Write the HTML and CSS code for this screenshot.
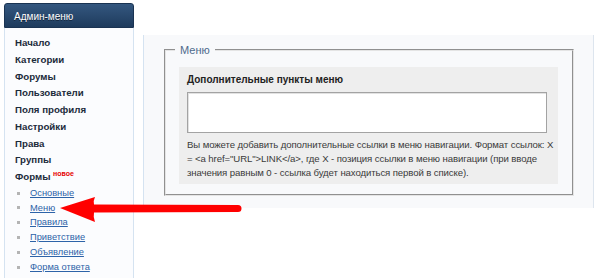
FILE: index.html
```html
<!DOCTYPE html>
<html lang="ru">
<head>
<meta charset="utf-8">
<title>Админ-меню</title>
<link rel="stylesheet" href="styles.css">
</head>
<body>
<div class="page">
  <aside class="sidebar">
    <div class="side-head">Админ-меню</div>
    <div class="side-body">
      <ul class="nav">
        <li>Начало</li>
        <li>Категории</li>
        <li>Форумы</li>
        <li>Пользователи</li>
        <li>Поля профиля</li>
        <li>Настройки</li>
        <li>Права</li>
        <li>Группы</li>
        <li>Формы <sup class="new">новое</sup></li>
      </ul>
      <ul class="sub">
        <li><a href="#">Основные</a></li>
        <li><a href="#">Меню</a></li>
        <li><a href="#">Правила</a></li>
        <li><a href="#">Приветствие</a></li>
        <li><a href="#">Объявление</a></li>
        <li><a href="#">Форма ответа</a></li>
      </ul>
    </div>
  </aside>
  <main class="main">
    <fieldset class="fs">
      <legend class="legend">Меню</legend>
      <div class="box">
        <div class="box-title">Дополнительные пункты меню</div>
        <textarea class="ta"></textarea>
        <p class="desc">Вы можете добавить дополнительные ссылки в меню навигации. Формат ссылок: X = &lt;a href="URL"&gt;LINK&lt;/a&gt;, где X - позиция ссылки в меню навигации (при вводе значения равным 0 - ссылка будет находиться первой в списке).</p>
      </div>
    </fieldset>
  </main>
  <svg class="arrow" width="600" height="278" viewBox="0 0 600 278" aria-hidden="true">
    <path d="M60 208 L95 197 Q93 201 94 204.5 L238 205 A3.5 3.5 0 0 1 238 212 L94 212.5 Q93 217 95 222 Z" fill="#ff0000"/>
  </svg>
</div>
</body>
</html>
```
FILE: styles.css
```css
html, body {
  margin: 0;
  padding: 0;
  background: #ffffff;
  overflow: hidden;
}
body {
  font-family: "Liberation Sans", Arial, sans-serif;
  font-size: 10px;
  color: #333;
}
.page {
  position: relative;
  display: flex;
  align-items: flex-start;
  padding-left: 4px;
  height: 278px;
  overflow: hidden;
}
.sidebar {
  width: 130px;
  margin-top: 3px;
  flex: none;
}
.side-head {
  height: 25px;
  line-height: 25px;
  box-sizing: border-box;
  padding-left: 9px;
  color: #fff;
  font-size: 10px;
  background: linear-gradient(#34577f, #1e3b5d);
  border: 1px solid #1a3352;
  border-radius: 3px 3px 0 0;
  text-shadow: 0 1px 0 #10243a;
}
.side-body {
  box-sizing: border-box;
  height: 250px;
  background: #fbfcfe;
  border-left: 1px solid #d5e3f1;
  border-right: 1px solid #d5e3f1;
  padding: 7px 0 0 10px;
}
.nav, .sub {
  list-style: none;
  margin: 0;
  padding: 0;
}
.nav li {
  font-weight: bold;
  font-size: 9.7px;
  line-height: 16.75px;
  color: #1c2b3b;
  white-space: nowrap;
}
.new {
  color: #e60000;
  font-size: 7px;
  font-weight: bold;
  vertical-align: 4px;
  line-height: 0;
}
.sub {
  margin-top: 0;
}
.sub li {
  display: flex;
  align-items: center;
  line-height: 14.8px;
}
.sub li::before {
  content: "";
  width: 3px;
  height: 3px;
  background: #b4b4b4;
  margin-left: 2px;
  margin-right: 10px;
  flex: none;
}
.sub a {
  color: #2d63a8;
  text-decoration: underline;
  font-size: 9.3px;
}
.main {
  margin-left: 9px;
  margin-top: 35px;
  width: 451px;
  box-sizing: border-box;
  background: #f8f9fb;
  border-left: 1px solid #d5e3f1;
  border-right: 1px solid #dde5ee;
  padding: 8px 19px 12px 20px;
  flex: none;
}
.fs {
  margin: 0;
  border: 2px groove #e4e4e4;
  padding: 10px 14px 10px 13px;
}
.legend {
  font-size: 11px;
  line-height: 14px;
  color: #4f6b8c;
  padding: 0 5px;
  margin-left: -4px;
}
.box {
  background: #eeeeee;
  padding: 5px 2px 4px 8px;
}
.box-title {
  font-weight: bold;
  color: #222;
  line-height: 15px;
}
.ta {
  display: block;
  box-sizing: border-box;
  width: 360px;
  height: 41px;
  margin: 5px 0 0 0;
  border: 1px solid #a3a3a3;
  box-shadow: inset 1px 1px 0 #e2e2e2;
  background: #fff;
  resize: none;
  padding: 2px;
}
.desc {
  margin: 5px 0 0 0;
  font-size: 9.6px;
  letter-spacing: -0.1px;
  line-height: 14px;
  color: #3a3a3a;
}
.arrow {
  position: absolute;
  left: 0;
  top: 0;
  pointer-events: none;
}
```
